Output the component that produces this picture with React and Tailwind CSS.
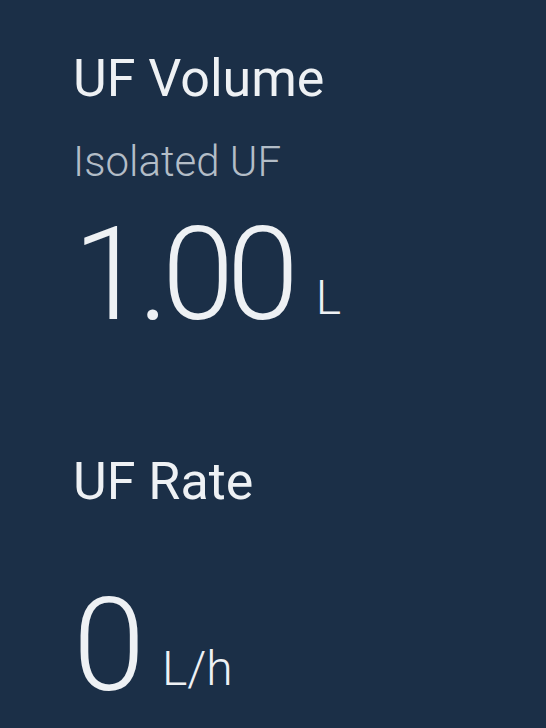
const Metric = ({ title, subtitle, value, unit, gapTop, valueGap }) => (
  <div className={`flex flex-col ${gapTop}`}>
    <h2 className="text-[52px] leading-none font-normal text-[#eef1f4]">{title}</h2>
    {subtitle && (
      <p className="mt-[36px] text-[42px] leading-none font-light text-[#b3bdc7]">{subtitle}</p>
    )}
    <div className={`flex items-end ${valueGap}`}>
      <span className="text-[130px] leading-none font-light tracking-[-0.055em] text-[#eef1f4]">{value}</span>
      <span className="ml-[24px] mb-[18px] text-[48px] leading-none font-light text-[#eef1f4]">{unit}</span>
    </div>
  </div>
)

export default function App() {
  return (
    <div className="w-[546px] h-[728px] overflow-hidden bg-[#1b2f47] pl-[73px] pt-[53px] font-['Roboto',sans-serif]">
      <Metric title="UF Volume" subtitle="Isolated UF" value="1.00" unit="L" gapTop="" valueGap="mt-[27px]" />
      <Metric title="UF Rate" value="0" unit="L/h" gapTop="mt-[116px]" valueGap="mt-[73px]" />
    </div>
  )
}
